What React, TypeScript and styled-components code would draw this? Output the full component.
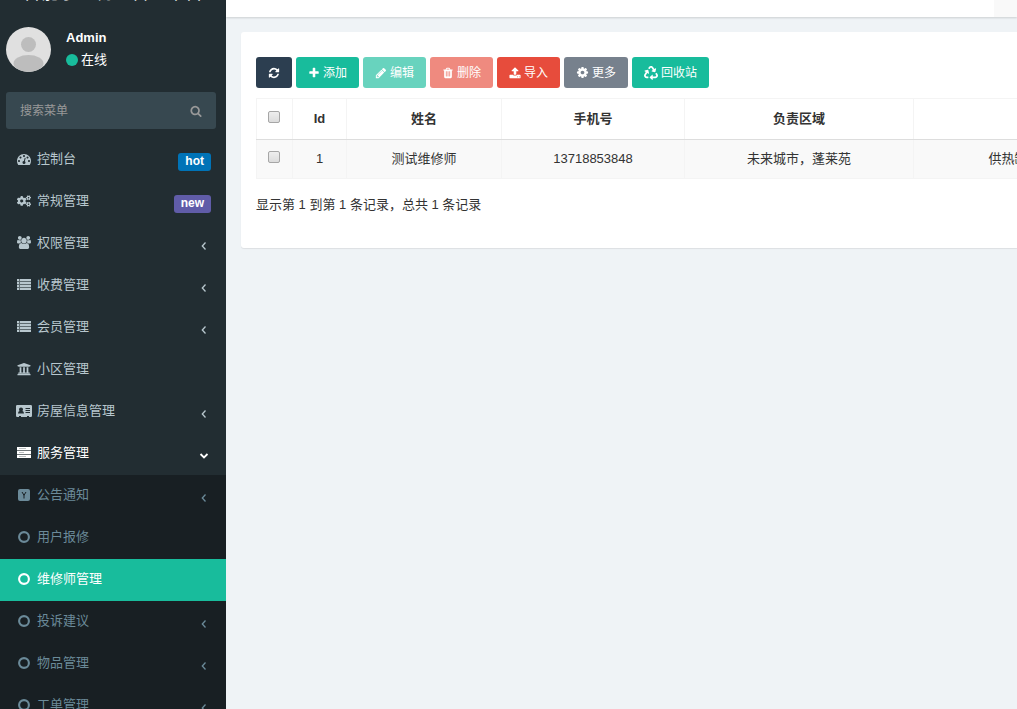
import React from "react";
import styled, { createGlobalStyle, css } from "styled-components";
import { FaCogs, FaRecycle, FaUniversity } from "react-icons/fa";

const GlobalStyle = createGlobalStyle`
  *, *::before, *::after { box-sizing: border-box; }
  html, body, #root { height: 100%; }
  body {
    margin: 0;
    overflow: hidden;
    background: #eff3f6;
    color: #333;
    font: 13px/18px "Liberation Sans", "Noto Sans CJK SC", sans-serif;
  }
  button, input { font: inherit; }
`;

const Page = styled.div`
  display: flex;
  height: 100vh;
  overflow: hidden;
`;

const Sidebar = styled.aside`
  flex: 0 0 226px;
  overflow: hidden;
  background: #222d32;
  color: #b8c7ce;
`;

const Brand = styled.a`
  display: flex;
  align-items: flex-end;
  justify-content: center;
  height: 17px;
  overflow: hidden;
  padding-bottom: 10px;
  color: #fff;
  font-size: 18px;
  line-height: 28px;
  white-space: nowrap;
  text-decoration: none;
`;

const UserPanel = styled.div`
  display: flex;
  gap: 15px;
  padding: 10px 6px 20px;
`;

const Avatar = styled.svg`
  width: 45px;
  height: 45px;
`;

const UserInfo = styled.div`
  display: flex;
  flex-direction: column;
  gap: 4px;
  padding-top: 2px;
  color: #fff;
`;

const UserName = styled.strong`
  font-size: 13px;
`;

const Status = styled.span`
  display: flex;
  align-items: center;
  gap: 3px;
`;

const StatusDot = styled.i`
  width: 12px;
  height: 12px;
  border-radius: 50%;
  background: #18bc9c;
`;

const SearchForm = styled.form`
  display: flex;
  height: 37px;
  margin: 0 10px 10px 6px;
  border-radius: 3px;
  background: #374850;
`;

const SearchInput = styled.input`
  flex: 1;
  min-width: 0;
  padding: 0 14px;
  border: 0;
  background: transparent;
  color: #fff;
  font-size: 12px;
  &::placeholder { color: #999; opacity: 1; }
`;

const SearchButton = styled.button`
  display: grid;
  place-items: center;
  width: 41px;
  padding: 0;
  border: 0;
  background: transparent;
  color: #999;
`;

const Menu = styled.ul<{ $nested?: boolean }>`
  margin: 0;
  padding: 0;
  list-style: none;
  ${(p) => p.$nested && css`background: #181f23;`}
`;

const MenuLink = styled.a<{ $tone: "top" | "open" | "sub" | "active" }>`
  display: flex;
  align-items: center;
  height: 42px;
  padding: 0 15px 2px 16px;
  text-decoration: none;
  color: ${(p) => ({ top: "#b8c7ce", open: "#fff", sub: "#6b8a99", active: "#fff" })[p.$tone]};
  background: ${(p) => (p.$tone === "active" ? "#18bc9c" : "transparent")};
`;

const MenuIcon = styled.span`
  display: grid;
  place-items: center;
  width: 16px;
  margin-right: 5px;
`;

const MenuText = styled.span`
  flex: 1;
`;

const Chevron = styled.span`
  display: grid;
  width: 14px;
  padding-top: 6px;
`;

const Label = styled.span<{ $color: string }>`
  margin-top: 5px;
  padding: 0 7px 1px;
  border-radius: 3px;
  background: ${(p) => p.$color};
  color: #fff;
  font-size: 12px;
  line-height: 17px;
  font-weight: bold;
`;

const Main = styled.main`
  flex: 1;
  min-width: 0;
`;

const Topbar = styled.header`
  display: flex;
  justify-content: flex-end;
  height: 17px;
  background: #fff;
  box-shadow: 0 1px 2px rgba(0, 0, 0, 0.15);
`;

const TopbarItem = styled.div`
  width: 23px;
  background: #f9f9f9;
`;

const Panel = styled.section`
  margin: 15px 0 0 15px;
  padding: 25px 0 34px 15px;
  overflow: hidden;
  border-radius: 3px 0 0 3px;
  background: #fff;
  box-shadow: 0 1px 1px rgba(0, 0, 0, 0.08);
`;

const Toolbar = styled.div`
  display: flex;
  gap: 4px;
  margin-bottom: 10px;
`;

const ToolButton = styled.button<{ $color: string }>`
  display: flex;
  align-items: center;
  justify-content: center;
  gap: 3px;
  height: 31px;
  padding: 0 12px;
  border: 0;
  border-radius: 3px;
  background: ${(p) => p.$color};
  color: #fff;
  font-size: 12px;
  white-space: nowrap;
  &:disabled { opacity: 0.65; }
`;

const TableScroll = styled.div`
  overflow: hidden;
`;

const Table = styled.table`
  width: 990px;
  table-layout: fixed;
  border-collapse: collapse;
  text-align: center;
`;

const cell = css`
  padding: 0;
  border: 1px solid #f4f4f4;
`;

const Th = styled.th`
  ${cell}
  height: 41px;
  border-bottom-color: #ddd;
`;

const Td = styled.td`
  ${cell}
  height: 39px;
  background: #f9f9f9;
`;

const Check = styled.input`
  display: block;
  appearance: none;
  width: 12px;
  height: 12px;
  margin: 0 auto 5px 11px;
  border: 1px solid #a6a6a6;
  border-radius: 2px;
  background: linear-gradient(#eee, #dcdcdc);
  &:checked { background: #18bc9c; }
`;

const Summary = styled.p`
  margin: 17px 0 0;
`;

const paths = {
  tachometer: "M384 1152q0-53-37.5-90.5t-90.5-37.5-90.5 37.5-37.5 90.5 37.5 90.5 90.5 37.5 90.5-37.5 37.5-90.5zm192-448q0-53-37.5-90.5t-90.5-37.5-90.5 37.5-37.5 90.5 37.5 90.5 90.5 37.5 90.5-37.5 37.5-90.5zm428 481l101-382q6-26-7.5-48.5t-38.5-29.5-48 6.5-30 39.5l-101 382q-60 5-107 43.5t-63 98.5q-20 77 20 146t117 89 146-20 89-117q16-60-6-117t-72-91zm660-33q0-53-37.5-90.5t-90.5-37.5-90.5 37.5-37.5 90.5 37.5 90.5 90.5 37.5 90.5-37.5 37.5-90.5zm-640-640q0-53-37.5-90.5t-90.5-37.5-90.5 37.5-37.5 90.5 37.5 90.5 90.5 37.5 90.5-37.5 37.5-90.5zm448 192q0-53-37.5-90.5t-90.5-37.5-90.5 37.5-37.5 90.5 37.5 90.5 90.5 37.5 90.5-37.5 37.5-90.5zm320 448q0 261-141 483-19 29-54 29h-1402q-35 0-54-29-141-221-141-483 0-182 71-348t191-286 286-191 348-71 348 71 286 191 191 286 71 348z",
  users: "M593 896q-162 5-265 128h-134q-82 0-138-40.5t-56-118.5q0-353 124-353 6 0 43.5 21t97.5 42.5 119 21.5q67 0 133-23-5 37-5 66 0 139 81 256zm1071 637q0 120-73 189.5t-194 69.5h-874q-121 0-194-69.5t-73-189.5q0-53 3.5-103.5t14-109 26.5-108.5 43-97.5 62-81 85.5-53.5 111.5-20q10 0 43 21.5t73 48 107 48 135 21.5 135-21.5 107-48 73-48 43-21.5q61 0 111.5 20t85.5 53.5 62 81 43 97.5 26.5 108.5 14 109 3.5 103.5zm-1024-1277q0 106-75 181t-181 75-181-75-75-181 75-181 181-75 181 75 75 181zm704 384q0 159-112.5 271.5t-271.5 112.5-271.5-112.5-112.5-271.5 112.5-271.5 271.5-112.5 271.5 112.5 112.5 271.5zm576 225q0 78-56 118.5t-138 40.5h-134q-103-123-265-128 81-117 81-256 0-29-5-66 66 23 133 23 59 0 119-21.5t97.5-42.5 43.5-21q124 0 124 353zm-128-609q0 106-75 181t-181 75-181-75-75-181 75-181 181-75 181 75 75 181z",
  refresh: "M1639 1056q0 5-1 7-64 268-268 434.5t-478 166.5q-146 0-282.5-55t-243.5-157l-129 129q-19 19-45 19t-45-19-19-45v-448q0-26 19-45t45-19h448q26 0 45 19t19 45-19 45l-137 137q71 66 161 102t187 36q134 0 250-65t186-179q11-17 53-117 8-23 30-23h192q13 0 22.5 9.5t9.5 22.5zm25-800v448q0 26-19 45t-45 19h-448q-26 0-45-19t-19-45 19-45l138-138q-148-137-349-137-134 0-250 65t-186 179q-11 17-53 117-8 23-30 23h-199q-13 0-22.5-9.5t-9.5-22.5v-7q65-268 270-434.5t480-166.5q146 0 284 55.5t245 156.5l130-129q19-19 45-19t45 19 19 45z",
  plus: "M1600 736v192q0 40-28 68t-68 28h-416v416q0 40-28 68t-68 28h-192q-40 0-68-28t-28-68v-416h-416q-40 0-68-28t-28-68v-192q0-40 28-68t68-28h416v-416q0-40 28-68t68-28h192q40 0 68 28t28 68v416h416q40 0 68 28t28 68z",
  pencil: "M491 1536l91-91-235-235-91 91v107h128v128h107zm523-928q0-22-22-22-10 0-17 7l-542 542q-7 7-7 17 0 22 22 22 10 0 17-7l542-542q7-7 7-17zm-54-192l416 416-832 832h-416v-416zm683 96q0 53-37 90l-166 166-416-416 166-165q36-38 90-38 53 0 91 38l235 234q37 39 37 91z",
  trash: "M704 1376v-704q0-14-9-23t-23-9h-64q-14 0-23 9t-9 23v704q0 14 9 23t23 9h64q14 0 23-9t9-23zm256 0v-704q0-14-9-23t-23-9h-64q-14 0-23 9t-9 23v704q0 14 9 23t23 9h64q14 0 23-9t9-23zm256 0v-704q0-14-9-23t-23-9h-64q-14 0-23 9t-9 23v704q0 14 9 23t23 9h64q14 0 23-9t9-23zm-544-992h448l-48-117q-7-9-17-11h-317q-10 2-17 11zm928 32v64q0 14-9 23t-23 9h-96v948q0 83-47 143.5t-113 60.5h-832q-66 0-113-58.5t-47-141.5v-952h-96q-14 0-23-9t-9-23v-64q0-14 9-23t23-9h309l70-167q15-37 54-63t79-26h320q40 0 79 26t54 63l70 167h309q14 0 23 9t9 23z",
  upload: "M1344 1472q0-26-19-45t-45-19-45 19-19 45 19 45 45 19 45-19 19-45zm256 0q0-26-19-45t-45-19-45 19-19 45 19 45 45 19 45-19 19-45zm128-224v320q0 40-28 68t-68 28h-1472q-40 0-68-28t-28-68v-320q0-40 28-68t68-28h427q21 56 70.5 92t110.5 36h256q61 0 110.5-36t70.5-92h427q40 0 68 28t28 68zm-325-648q-17 40-59 40h-256v448q0 26-19 45t-45 19h-256q-26 0-45-19t-19-45v-448h-256q-42 0-59-40-17-39 14-69l448-448q18-19 45-19t45 19l448 448q31 30 14 69z",
  cog: "M1152 896q0-106-75-181t-181-75-181 75-75 181 75 181 181 75 181-75 75-181zm512-109v222q0 12-8 23t-20 13l-185 28q-19 54-39 91 35 50 107 138 10 12 10 25t-9 23q-27 37-99 108t-94 71q-12 0-26-9l-138-108q-44 23-91 38-16 136-29 186-7 28-36 28h-222q-14 0-24.5-8.5t-11.5-21.5l-28-184q-49-16-90-37l-141 107q-10 9-25 9-14 0-25-11-126-114-165-168-7-10-7-23 0-12 8-23 15-21 51-66.5t54-70.5q-27-50-41-99l-183-27q-13-2-21-12.5t-8-23.5v-222q0-12 8-23t19-13l186-28q14-46 39-92-40-57-107-138-10-12-10-24 0-10 9-23 26-36 98.5-107.5t94.5-71.5q13 0 26 10l138 107q44-23 91-38 16-136 29-186 7-28 36-28h222q14 0 24.5 8.5t11.5 21.5l28 184q49 16 90 37l142-107q9-9 24-9 13 0 25 10 129 119 165 170 7 8 7 22 0 12-8 23-15 21-51 66.5t-54 70.5q26 50 41 98l183 28q13 2 21 12.5t8 23.5z",
  search: "M1216 832q0-185-131.5-316.5t-316.5-131.5-316.5 131.5-131.5 316.5 131.5 316.5 316.5 131.5 316.5-131.5 131.5-316.5zm512 832q0 52-38 90t-90 38q-54 0-90-38l-343-342q-179 124-399 124-143 0-273.5-55.5t-225-150-150-225-55.5-273.5 55.5-273.5 150-225 225-150 273.5-55.5 273.5 55.5 225 150 150 225 55.5 273.5q0 220-124 399l343 343q37 37 37 90z",
};

function Glyph({ name, size = 14, box = 1792 }: { name: keyof typeof paths; size?: number; box?: number }) {
  return (
    <svg width={size} height={size} viewBox={`0 0 ${box} ${box}`} fill="currentColor" aria-hidden="true">
      <path d={paths[name]} />
    </svg>
  );
}

const List = () => (
  <svg width="14" height="12" viewBox="0 0 14 12" fill="currentColor" aria-hidden="true">
    <path d="M0 0h14v11H0z" opacity=".4" />
    <path d="M0 0h2v2H0zM3 0h11v2H3zM0 3h2v2H0zM3 3h11v2H3zM0 6h2v2H0zM3 6h11v2H3zM0 9h2v2H0zM3 9h11v2H3z" />
  </svg>
);

const IdCard = () => (
  <svg width="16" height="14" viewBox="0 0 16 14" fill="currentColor" fillRule="evenodd" aria-hidden="true">
    <path d="M1.200 1h13.600Q16 1 16 2.200v9.600Q16 13 14.800 13H13v-1h-2v1H5v-1H3v1H1.200Q0 13 0 11.800V2.200Q0 1 1.200 1ZM2 9.600h6Q8 7.300 6.400 6.900Q7 6.300 7 5.300Q7 3.500 5 3.500T3 5.300q0 1 .600 1.600Q2 7.300 2 9.600ZM9.500 4v1H14V4ZM9.500 6v1H14V6ZM9.500 8v1H14V8Z" />
  </svg>
);

const Server = () => (
  <svg width="14" height="12" viewBox="0 0 14 12" fill="currentColor" aria-hidden="true">
    <path d="M0 0h14v11H0z" opacity=".35" />
    <path d="M0 0h14v3H0zM0 4h14v3H0zM0 8h14v3H0z" />
    <path d="M2 1.500h7M2 5.500h5M2 9.500h7" stroke="#222d32" strokeOpacity=".3" />
  </svg>
);

const YSquare = () => (
  <svg width="12" height="12" viewBox="0 0 12 12" aria-hidden="true">
    <rect width="12" height="12" rx="2" fill="currentColor" />
    <path d="M4 3l2 3.200L8 3M6 6v3.500" fill="none" stroke="#181f23" />
  </svg>
);

const Ring = () => (
  <svg width="12" height="12" viewBox="0 0 12 12" aria-hidden="true">
    <circle cx="6" cy="6" r="4.900" fill="none" stroke="currentColor" strokeWidth="2.100" />
  </svg>
);

const Angle = ({ down }: { down?: boolean }) => (
  <svg width="14" height="14" viewBox="0 0 14 14" fill="none" stroke="currentColor" strokeWidth={down ? 1.8 : 1.3} aria-hidden="true">
    <path d={down ? "M3.500 5L7 8.500l3.500-3.500" : "M8.500 3.500L5.300 7l3.200 3.500"} />
  </svg>
);

type Item = { text: string; icon: React.ReactNode; arrow?: boolean; label?: [string, string]; active?: boolean };

const topItems: Item[] = [
  { text: "控制台", icon: <Glyph name="tachometer" />, label: ["hot", "#0073b7"] },
  { text: "常规管理", icon: <FaCogs size={14} />, label: ["new", "#605ca8"] },
  { text: "权限管理", icon: <Glyph name="users" box={1920} />, arrow: true },
  { text: "收费管理", icon: <List />, arrow: true },
  { text: "会员管理", icon: <List />, arrow: true },
  { text: "小区管理", icon: <FaUniversity size={14} /> },
  { text: "房屋信息管理", icon: <IdCard />, arrow: true },
];

const subItems: Item[] = [
  { text: "公告通知", icon: <YSquare />, arrow: true },
  { text: "用户报修", icon: <Ring /> },
  { text: "维修师管理", icon: <Ring />, active: true },
  { text: "投诉建议", icon: <Ring />, arrow: true },
  { text: "物品管理", icon: <Ring />, arrow: true },
  { text: "工单管理", icon: <Ring />, arrow: true },
];

function MenuRow({ item, tone }: { item: Item; tone: "top" | "sub" }) {
  return (
    <li>
      <MenuLink href="#" $tone={item.active ? "active" : tone}>
        <MenuIcon>{item.icon}</MenuIcon>
        <MenuText>{item.text}</MenuText>
        {item.label && <Label $color={item.label[1]}>{item.label[0]}</Label>}
        {item.arrow && <Chevron><Angle /></Chevron>}
      </MenuLink>
    </li>
  );
}

export default function App() {
  return (
    <>
      <GlobalStyle />
      <Page>
        <Sidebar>
          <Brand href="#">智能小区物业管理平台</Brand>
          <UserPanel>
            <Avatar viewBox="0 0 45 45" aria-hidden="true">
              <clipPath id="avatar"><circle cx="22.500" cy="22.500" r="22.500" /></clipPath>
              <g clipPath="url(#avatar)">
                <rect width="45" height="45" fill="#e0e0e0" />
                <circle cx="22.500" cy="17.500" r="7.500" fill="#bdbdbd" />
                <ellipse cx="22.500" cy="36.500" rx="15" ry="8.500" fill="#bdbdbd" />
              </g>
            </Avatar>
            <UserInfo>
              <UserName>Admin</UserName>
              <Status><StatusDot />在线</Status>
            </UserInfo>
          </UserPanel>
          <SearchForm onSubmit={(e) => e.preventDefault()}>
            <SearchInput type="text" placeholder="搜索菜单" aria-label="搜索菜单" />
            <SearchButton type="submit" aria-label="搜索"><Glyph name="search" size={12} /></SearchButton>
          </SearchForm>
          <Menu>
            {topItems.map((item) => <MenuRow key={item.text} item={item} tone="top" />)}
            <li>
              <MenuLink href="#" $tone="open">
                <MenuIcon><Server /></MenuIcon>
                <MenuText>服务管理</MenuText>
                <Chevron><Angle down /></Chevron>
              </MenuLink>
              <Menu $nested>
                {subItems.map((item) => <MenuRow key={item.text} item={item} tone="sub" />)}
              </Menu>
            </li>
          </Menu>
        </Sidebar>
        <Main>
          <Topbar><TopbarItem /></Topbar>
          <Panel>
            <Toolbar>
              <ToolButton $color="#2c3e50" aria-label="刷新"><Glyph name="refresh" size={12} /></ToolButton>
              <ToolButton $color="#18bc9c"><Glyph name="plus" size={12} />添加</ToolButton>
              <ToolButton $color="#18bc9c" disabled><Glyph name="pencil" size={12} />编辑</ToolButton>
              <ToolButton $color="#e74c3c" disabled><Glyph name="trash" size={12} />删除</ToolButton>
              <ToolButton $color="#e74c3c"><Glyph name="upload" size={12} />导入</ToolButton>
              <ToolButton $color="#77818d"><Glyph name="cog" size={13} />更多</ToolButton>
              <ToolButton $color="#18bc9c"><FaRecycle size={14} />回收站</ToolButton>
            </Toolbar>
            <TableScroll>
              <Table>
                <colgroup>
                  <col width="36" /><col width="54" /><col width="155" /><col width="183" /><col width="229" /><col />
                </colgroup>
                <thead>
                  <tr>
                    <Th><Check type="checkbox" aria-label="全选" /></Th>
                    <Th>Id</Th><Th>姓名</Th><Th>手机号</Th><Th>负责区域</Th><Th />
                  </tr>
                </thead>
                <tbody>
                  <tr>
                    <Td><Check type="checkbox" aria-label="选择测试维修师" /></Td>
                    <Td>1</Td><Td>测试维修师</Td><Td>13718853848</Td><Td>未来城市，蓬莱苑</Td><Td>供热缺失，水电维修，管道维修</Td>
                  </tr>
                </tbody>
              </Table>
            </TableScroll>
            <Summary>显示第 1 到第 1 条记录，总共 1 条记录</Summary>
          </Panel>
        </Main>
      </Page>
    </>
  );
}
